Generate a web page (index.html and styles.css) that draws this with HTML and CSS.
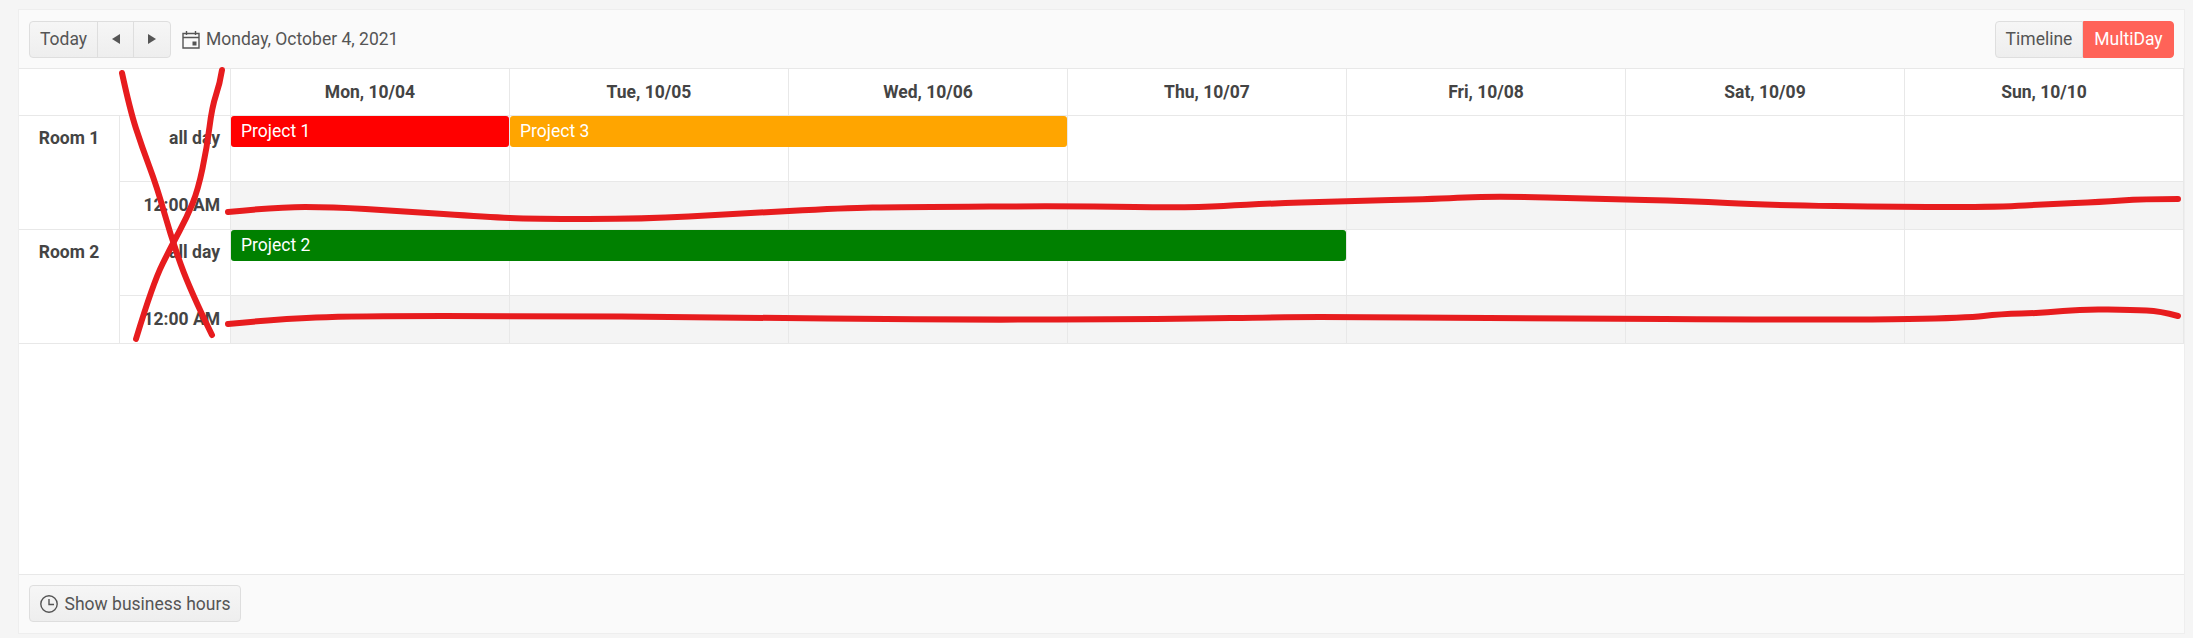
FILE: index.html
```html
<!DOCTYPE html>
<html lang="en">
<head>
<meta charset="utf-8">
<title>Scheduler</title>
<link rel="stylesheet" href="styles.css">
</head>
<body>
<div class="scheduler">
  <div class="toolbar">
    <div class="btn-group">
      <button class="btn btn-today">Today</button>
      <button class="btn btn-nav"><svg width="8" height="10" viewBox="0 0 8 10"><path d="M8 0V10L0 5Z"/></svg></button>
      <button class="btn btn-nav"><svg width="8" height="10" viewBox="0 0 8 10"><path d="M0 0V10L8 5Z"/></svg></button>
    </div>
    <div class="date">
      <svg class="cal" width="18" height="19" viewBox="0 0 18 19"><path class="ln" d="M1 3.500H17V18H1ZM1 7.500H17M4.500 1V5M13.500 1V5"/><rect class="fl" x="10.500" y="11.500" width="4" height="4"/></svg>
      <span>Monday, October 4, 2021</span>
    </div>
    <div class="btn-group views">
      <button class="btn btn-view">Timeline</button>
      <button class="btn btn-view active">MultiDay</button>
    </div>
  </div>
  <div class="grid">
    <div class="cell corner"></div>
    <div class="cell head">Mon, 10/04</div>
    <div class="cell head">Tue, 10/05</div>
    <div class="cell head">Wed, 10/06</div>
    <div class="cell head">Thu, 10/07</div>
    <div class="cell head">Fri, 10/08</div>
    <div class="cell head">Sat, 10/09</div>
    <div class="cell head">Sun, 10/10</div>

    <div class="cell room">Room 1</div>
    <div class="cell label allday">all day</div>
    <div class="cell"><div class="event span-1 ev-red">Project 1</div></div>
    <div class="cell"><div class="event span-2 ev-orange">Project 3</div></div>
    <div class="cell"></div><div class="cell"></div><div class="cell"></div><div class="cell"></div><div class="cell"></div>
    <div class="cell label time">12:00 AM</div>
    <div class="cell slot"></div><div class="cell slot"></div><div class="cell slot"></div><div class="cell slot"></div><div class="cell slot"></div><div class="cell slot"></div><div class="cell slot"></div>

    <div class="cell room">Room 2</div>
    <div class="cell label allday">all day</div>
    <div class="cell"><div class="event span-4 ev-green">Project 2</div></div>
    <div class="cell"></div><div class="cell"></div><div class="cell"></div><div class="cell"></div><div class="cell"></div><div class="cell"></div>
    <div class="cell label time">12:00 AM</div>
    <div class="cell slot"></div><div class="cell slot"></div><div class="cell slot"></div><div class="cell slot"></div><div class="cell slot"></div><div class="cell slot"></div><div class="cell slot"></div>
  </div>
  <div class="spacer"></div>
  <div class="footer">
    <button class="btn btn-hours">
      <svg width="18" height="18" viewBox="0 0 18 18"><circle class="ln" cx="9" cy="9" r="8.200"/><path class="ln" d="M9 4V9.500H14"/></svg>
      <span>Show business hours</span>
    </button>
  </div>
</div>
<svg class="marks" width="2193" height="638" viewBox="0 0 2193 638">
  <path d="M228 212Q278 207 305 207Q332 207 365.500 209Q399 211 443.500 214Q488 217 510 218Q532 219 588 219Q644 219 688.500 216.500Q733 214 789 211Q845 208 872.500 207.500Q900 207 989.500 206.500Q1079 206 1134.500 207Q1190 208 1223.500 206Q1257 204 1301.500 202.500Q1346 201 1391 200Q1436 199 1465 197.500Q1494 196 1547 197.500Q1600 199 1645 200Q1690 201 1727.500 203Q1765 205 1834.500 206Q1904 207 1952 207Q2000 207 2025 205.500Q2050 204 2075 203Q2100 202 2121.500 200.500Q2143 199 2178 199"/>
  <path d="M228 324Q278 319 316 317.500Q354 316 443 316Q532 316 621.500 316.500Q711 317 828 318.500Q945 320 1056.500 319.500Q1168 319 1230.500 318Q1293 317 1319.500 317Q1346 317 1413 317.500Q1480 318 1665 319Q1850 320 1908.500 319Q1967 318 1983.500 316Q2000 314 2021.500 313.500Q2043 313 2063 311Q2083 309 2108 309.500Q2133 310 2146.500 310.500Q2160 311 2178 316"/>
  <path d="M122 73Q130 110 136 128.500Q142 147 149.500 167Q157 187 164.500 213.500Q172 240 181 265Q190 290 212 335"/>
  <path d="M222 70Q220 83 216 95Q212 107 209.500 127Q207 147 202.500 168.500Q198 190 192.500 203.500Q187 217 179.500 231Q172 245 162.500 264Q153 283 136 339"/>
</svg>
</body>
</html>
```
FILE: styles.css
```css
* { box-sizing: border-box; }
html, body { margin: 0; padding: 0; }
body {
  background: #f5f5f5;
  height: 638px;
  overflow: hidden;
  padding: 9px 8px 0 18px;
  font-family: Roboto, "Liberation Sans", sans-serif;
  font-size: 17.5px;
  color: #555;
  position: relative;
}
.scheduler {
  display: flex;
  flex-direction: column;
  height: 625px;
  background: #fff;
  border: 1px solid #eee;
}
.toolbar {
  display: flex;
  align-items: center;
  height: 59px;
  padding: 0 10px;
  background: #fafafa;
  border-bottom: 1px solid #e8e8e8;
}
.btn-group { display: flex; }
.btn {
  height: 37px;
  padding: 0;
  font: inherit;
  color: #555;
  background: linear-gradient(#f6f6f6, #eeeeee);
  border: 1px solid #dedede;
  display: flex;
  align-items: center;
  justify-content: center;
}
.btn svg path { fill: #555; }
.btn-today { width: 69px; border-radius: 4px 0 0 4px; }
.btn-nav { width: 37px; margin-left: -1px; }
.btn-nav:last-child { width: 38px; border-radius: 0 4px 4px 0; }
.date { display: flex; align-items: center; gap: 6px; margin-left: 11px; }
.ln { fill: none !important; stroke: #555; stroke-width: 1.4; }
.fl { fill: #555; }
.views { margin-left: auto; }
.btn-view { width: 88px; border-radius: 4px 0 0 4px; }
.btn-view.active {
  width: 91px;
  color: #fff;
  background: #ff6358;
  border-color: #ff6358;
  border-radius: 0 4px 4px 0;
}
.grid {
  display: grid;
  grid-template-columns: 101px 111px repeat(7, 279px);
  grid-template-rows: 47px 66px 48px 66px 48px;
}
.cell {
  position: relative;
  border-right: 1px solid #e8e8e8;
  border-bottom: 1px solid #e8e8e8;
  min-width: 0;
}
.corner { grid-column: 1 / 3; }
.head {
  font-weight: 700;
  color: #444;
  text-align: center;
  line-height: 46px;
}
.room {
  grid-row: span 2;
  font-weight: 700;
  color: #444;
  text-align: center;
  padding-top: 11px;
  line-height: 22px;
}
.label {
  font-weight: 700;
  color: #444;
  text-align: right;
  padding-right: 10px;
  line-height: 22px;
}
.allday { padding-top: 11px; }
.time { padding-top: 12px; }
.slot { background: #f4f4f4; }
.event {
  position: absolute;
  top: 0;
  left: 0;
  z-index: 1;
  height: 31px;
  padding-left: 10px;
  color: #fff;
  line-height: 31px;
  border-radius: 3px;
}
.span-1 { width: 278px; }
.span-2 { width: 557px; }
.span-4 { width: 1115px; }
.ev-red { background: #f00; }
.ev-orange { background: #ffa500; }
.ev-green { background: #008000; }
.spacer { flex: 1; }
.footer {
  height: 59px;
  padding: 10px;
  background: #fafafa;
  border-top: 1px solid #e8e8e8;
}
.btn-hours { width: 212px; border-radius: 4px; gap: 7px; }
.marks { position: absolute; top: 0; left: 0; pointer-events: none; }
.marks path {
  fill: none;
  stroke: #e71c1e;
  stroke-width: 6;
  stroke-linecap: round;
  stroke-linejoin: round;
}
```
